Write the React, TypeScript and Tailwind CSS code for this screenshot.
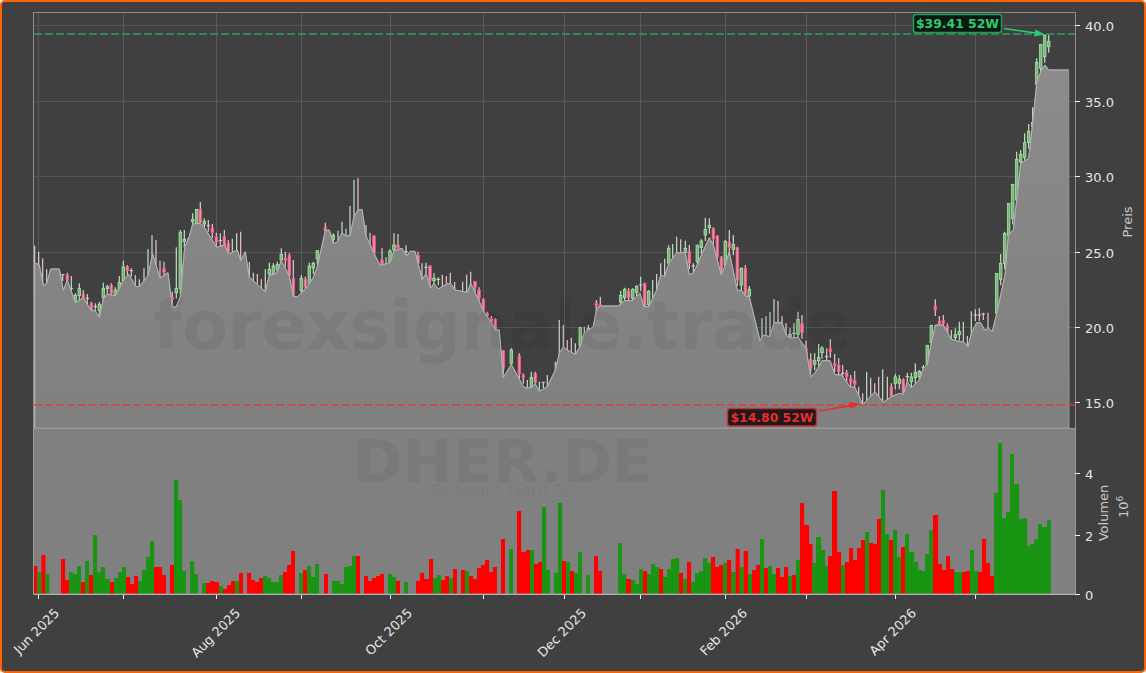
const area1 = [[104,788],[118,795],[130,856],[140,850],[152,807],[178,807],[190,871],[202,840],[226,908],[250,893],[274,932],[286,932],[298,952],[310,897],[322,882],[346,888],[370,842],[386,823],[408,860],[420,858],[444,826],[458,762],[480,834],[504,818],[517,920],[528,922],[541,890],[554,740],[566,716],[578,672],[600,670],[612,680],[650,742],[674,735],[686,762],[712,750],[722,782],[736,755],[748,832],[782,862],[796,875],[808,826],[830,820],[844,782],[868,828],[880,890],[892,890],[916,868],[940,832],[952,800],[976,692],[988,690],[1000,730],[1012,726],[1026,698],[1038,708],[1050,706],[1062,650],[1074,630],[1086,628],[1098,708],[1122,760]];
const area2 = [[0,256],[30,248],[42,212],[66,205],[80,228],[90,214],[105,214],[127,300],[138,280],[152,325],[162,310],[175,327],[200,312],[212,310],[225,330],[262,337],[272,310],[298,365],[310,392],[334,428],[346,450],[358,450],[370,593],[394,553],[418,597],[430,620],[442,625],[454,622],[466,612],[478,634],[502,620],[526,570],[538,520],[550,500],[562,510],[586,523],[600,500],[612,460],[640,440],[650,385],[662,378],[714,378],[734,362],[756,362],[780,340],[792,380],[806,380],[830,330],[842,285],[854,290],[866,250],[890,218],[916,218],[928,284],[940,278],[952,255],[964,225],[988,173],[1000,195],[1024,285],[1036,255],[1048,215],[1072,332],[1084,330],[1096,348],[1108,350]];
const area3 = [[0,1022],[10,1005],[30,1010],[42,968],[66,968],[78,1005],[90,1015],[114,1012],[138,1045],[152,1130],[164,1120],[186,1082],[210,1082],[225,1124],[245,1125],[270,1160],[284,1162],[296,1185],[308,1215],[330,1190],[345,1175],[370,1207],[394,1190],[418,1180],[430,1183],[442,1145],[454,1163],[478,1140],[490,1105],[502,1095],[514,1030],[526,975],[550,975],[574,1018],[598,1025],[610,1025],[624,1040],[634,1000],[650,968],[662,968],[674,990],[686,985],[697,995],[710,940],[735,825],[745,705],[760,690],[770,600],[782,490],[806,475],[817,380],[830,250],[842,215],[855,195],[866,210],[926,210]];

const pts: [number, number][] = [
  ...area1.map(([x, y]): [number, number] => [x / 3, y / 3]),
  ...area2.map(([x, y]): [number, number] => [380 + x / 3, 180 + y / 3]),
  ...area3.map(([x, y]): [number, number] => [760 + x / 3, y / 3]),
];
const topLine = pts.map(([x, y]) => `L${x.toFixed(1)} ${y.toFixed(1)}`).join(" ");
const areaPath = `M35 428 L35 ${pts[0][1]} ${topLine} L1069 428 Z`;
const linePath = `M35 ${pts[0][1]} ${topLine}`;

type C = [number, string, number, number?, number?];
const c1: C[] = [[104,"r",737],[116,"g",755],[128,"r",775],[140,"g",808],[188,"r",824,824,825],[202,"r",818,825,840],[214,"g",828,866,866],[226,"g",880,886,905],[238,"g",850,866,886],[250,"r",870,882,893],[262,"g",882,895,895],[274,"r",905,910,932],[286,"g",910,920,920],[298,"g",905,913,932],[310,"g",848,866,893],[322,"g",855,860,866],[334,"r",850,856,880],[346,"g",862,870,885],[358,"g",828,847,870],[370,"g",782,801,842],[382,"r",795,800,812],[394,"r",805,812,812],[406,"r",825],[418,"g",838],[432,"g",805],[444,"g",747],[456,"g",706],[468,"r",720],[480,"r",782],[492,"r",785,805,817],[517,"r",875,892,898],[529,"g",742,866,878],[541,"g",690,697,865],[553,"g",690,718,725],[566,"g",714,716,716],[578,"g",640,658,665],[590,"g",628,628,670],[601,"r",606,628,668],[613,"g",655,664,672],[625,"r",660,677,677],[637,"r",672,683,697],[649,"r",698,710,728],[661,"g",700,722,722],[673,"r",690,710,736],[685,"r",720,730,754],[697,"g",716],[710,"g",700],[722,"r",695],[748,"r",786],[760,"r",818],[772,"r",822],[784,"r",838],[796,"g",808],[808,"g",788,808,822],[820,"g",790,798,822],[832,"g",785,794,810],[844,"g",745,763,780],[856,"r",755,775,782],[868,"r",760,766,826],[880,"r",780,835,888],[904,"g",825,835,872],[916,"r",830,838,860],[928,"g",788,798,850],[940,"g",785,790,804],[952,"g",752,752,776],[976,"r",668,683,692],[1000,"g",700,706,718],[1014,"g",692],[1026,"g",665],[1038,"g",686],[1050,"g",618],[1062,"g",540],[1074,"r",535],[1098,"r",675],[1110,"r",698],[1122,"r",705,708,760]];
const c2: C[] = [[6,"r",205,240,252],[18,"g",232],[30,"g",208,213,247],[42,"g",160,195,210],[54,"r",162,195,203],[66,"g",205],[78,"g",196,215,215],[114,"r",215,226,250],[126,"r",250],[138,"g",248,262,262],[150,"r",255,258,302],[162,"g",280,295,302],[175,"g",292,298,298],[187,"r",284],[199,"r",288],[211,"r",278],[224,"r",306],[248,"r",305],[260,"g",284],[272,"r",275],[285,"r",304,304,322],[297,"r",322,330,354],[310,"r",355,358,392],[322,"r",395,400,408],[334,"r",408,416,426],[346,"r",415,418,448],[370,"r",510,512,565],[394,"g",505,510,550],[418,"r",520,528,582],[430,"r",580,586,593],[442,"r",600],[454,"g",575,592,622],[466,"r",575,580,607],[478,"g",605],[490,"g",607,607,607],[502,"g",585],[526,"g",545],[538,"g",420],[550,"r",435],[562,"r",480],[574,"r",473],[586,"g",490],[601,"g",440,443,500],[613,"r",440],[625,"g",435,445,478],[649,"r",360,370,377],[661,"r",350,374,380],[722,"g",332,346,366],[734,"g",323,328,353],[746,"r",325,333,353],[758,"g",325,328,355],[770,"g",316,319,338],[782,"g",290,315,315],[794,"r",308,310,380],[806,"g",330,334,374],[818,"g",300],[830,"g",282],[842,"g",250],[854,"g",236],[866,"g",196,205,250],[878,"g",192],[890,"g",170],[902,"r",178],[916,"g",182,205,218],[928,"r",195,214,250],[940,"g",250,258,258],[952,"g",195,195,245],[964,"g",178,183,203],[976,"g",113,148,165],[988,"g",115,136,143],[1000,"r",142,145,176],[1012,"r",165,168,230],[1024,"r",228,233,280],[1036,"g",180,184,255],[1048,"r",150,187,203],[1060,"g",165,193,208],[1072,"r",200,202,300],[1084,"g",262,265,315],[1096,"r",255,265,345],[1108,"g",318,328,348]];
const c3: C[] = [[6,"g",955],[18,"g",948],[30,"g",937],[42,"g",897],[54,"r",903],[66,"r",948],[78,"r",970],[90,"g",985,1003,1010],[102,"g",970,1000,1000],[114,"g",935,958,1003],[126,"r",945,970,998],[138,"r",1022,1045,1070],[152,"r",1060,1078,1105],[164,"g",1060,1082,1093],[176,"g",1032,1072,1082],[186,"g",1038,1044,1058],[200,"r",1045,1070,1070],[211,"r",1018,1045,1055],[224,"r",1062,1090,1097],[236,"r",1075,1095,1115],[248,"r",1095,1120,1120],[260,"r",1110,1117,1130],[272,"r",1125,1135,1148],[284,"r",1113,1141,1153],[296,"r",1160],[308,"r",1180],[320,"g",1115],[332,"r",1133],[344,"r",1150],[356,"r",1130],[368,"g",1108],[382,"g",1130],[394,"r",1150,1160,1188],[406,"g",1122,1131,1150],[418,"g",1125,1138,1150],[430,"r",1135,1138,1177],[442,"g",1118,1130,1130],[454,"g",1118,1131,1145],[466,"g",1090,1117,1133],[478,"g",1110,1114,1130],[490,"g",1095,1103,1103],[502,"g",1036,1036,1097],[514,"g",975,976,1028],[526,"r",898,918,930],[538,"r",948,964,972],[550,"r",945,961,970],[562,"r",970,978,998],[574,"g",990],[586,"g",985,1004,1013],[598,"g",965,994,1004],[610,"g",965],[622,"r",1008],[634,"g",934],[646,"g",928,945,945],[658,"r",925,945,945],[670,"r",938,942,942],[684,"r",938],[710,"g",820,820,940],[722,"g",762,790,838],[734,"g",695,700,790],[746,"g",610,610,708],[758,"g",553,553,655],[770,"g",455,478,600],[782,"g",450,463,485],[794,"g",400,428,472],[806,"g",372,394,428],[818,"g",322,367,380],[830,"g",175,187,253],[842,"g",133,133,205],[854,"g",105,105,170],[866,"g",105,124,140]];

const candles = [
  ...c1.map((c) => ({ c, ox: 0, oy: 0 })),
  ...c2.map((c) => ({ c, ox: 380, oy: 180 })),
  ...c3.map((c) => ({ c, ox: 760, oy: 0 })),
];

type V = [number, string, number];
const v1: V[] = [[102,"r",438],[112,"g",457],[124,"r",405],[136,"g",462],[183,"r",417],[195,"r",480],[207,"g",457],[219,"g",462],[231,"g",438],[243,"r",486],[255,"g",423],[267,"r",465],[279,"g",345],[291,"g",457],[303,"g",441],[315,"g",477],[330,"r",486],[342,"g",474],[354,"g",457],[366,"g",441],[378,"r",471],[390,"r",492],[402,"r",468],[414,"g",483],[426,"g",450],[438,"g",411],[450,"g",363],[462,"r",441],[474,"r",441],[486,"r",465],[510,"r",435],[522,"g",180],[534,"g",240],[546,"g",453],[570,"g",423],[582,"g",462],[606,"g",489],[618,"r",489],[630,"r",483],[642,"r",486],[657,"g",498],[669,"r",507],[681,"r",495],[693,"r",483],[705,"g",483],[717,"r",459],[741,"r",459],[753,"r",480],[765,"r",486],[777,"r",474],[789,"g",468],[801,"g",474],[813,"g",486],[825,"g",486],[837,"g",465],[849,"r",456],[861,"r",435],[873,"r",393],[897,"g",459],[909,"r",450],[921,"g",438],[933,"g",471],[945,"g",432],[972,"r",462],[996,"g",483],[1008,"g",483],[1020,"g",492],[1032,"g",441],[1044,"g",438],[1056,"g",408],[1068,"r",408],[1092,"r",468],[1104,"r",483],[1116,"r",474],[1128,"r",468]];
const v2: V[] = [[0,"r",462],[24,"g",462],[36,"g",471],[48,"r",483],[72,"g",486],[108,"r",483],[120,"r",459],[132,"r",477],[147,"r",417],[159,"g",474],[171,"g",465],[183,"r",480],[195,"r",468],[207,"g",474],[219,"r",447],[243,"r",450],[255,"g",453],[267,"r",468],[279,"r",477],[291,"r",444],[303,"r",435],[315,"r",420],[327,"r",456],[339,"r",441],[363,"r",357],[387,"g",387],[411,"r",273],[423,"r",396],[438,"r",390],[450,"g",390],[462,"r",432],[474,"r",426],[486,"g",261],[498,"g",450],[522,"g",459],[534,"g",249],[546,"r",423],[558,"g",426],[570,"r",453],[582,"g",459],[594,"g",396],[618,"g",465],[642,"r",408],[654,"r",453],[714,"g",369],[726,"g",462],[738,"r",477],[753,"g",480],[765,"g",492],[777,"g",447],[789,"r",453],[801,"g",462],[813,"g",432],[825,"g",441],[837,"r",447],[849,"g",471],[861,"g",447],[873,"g",417],[885,"g",414],[897,"r",459],[909,"g",477],[921,"r",426],[933,"g",486],[945,"g",459],[957,"g",453],[969,"g",414],[981,"g",429],[993,"r",411],[1005,"r",441],[1017,"r",435],[1029,"g",429],[1041,"r",420],[1053,"g",456],[1067,"r",387],[1079,"g",441],[1091,"r",393],[1104,"g",462],[1116,"r",450],[1128,"r",435]];
const v3: V[] = [[0,"g",357],[12,"r",444],[24,"g",438],[36,"g",462],[48,"r",444],[60,"r",471],[72,"r",441],[84,"g",468],[96,"r",465],[108,"g",420],[120,"r",249],[132,"r",315],[147,"r",372],[157,"g",429],[168,"g",351],[183,"g",390],[195,"g",438],[204,"r",408],[216,"r",213],[231,"r",396],[243,"g",435],[255,"r",426],[267,"r",384],[279,"r",420],[291,"r",384],[303,"r",360],[315,"g",336],[327,"r",369],[339,"r",372],[351,"r",297],[363,"g",210],[375,"g",342],[387,"r",360],[399,"g",330],[411,"g",411],[423,"r",381],[435,"g",342],[447,"g",396],[462,"g",426],[474,"g",450],[486,"g",453],[495,"g",402],[507,"g",330],[519,"r",285],[534,"r",432],[546,"r",450],[558,"r",408],[570,"r",447],[582,"g",456],[594,"g",456],[606,"r",456],[618,"r",453],[630,"g",390],[642,"g",453],[654,"r",456],[666,"r",357],[678,"r",429],[690,"r",468],[702,"g",219],[714,"g",69],[726,"g",294],[738,"g",276],[750,"g",102],[762,"g",192],[777,"g",297],[789,"g",294],[801,"g",378],[810,"g",372],[822,"g",357],[834,"g",312],[846,"g",321],[861,"g",300]];

const bars = [
  ...v1.map((v) => ({ x: v[0] / 3, col: v[1], y: 420 + v[2] / 3 })),
  ...v2.map((v) => ({ x: 380 + v[0] / 3, col: v[1], y: 420 + v[2] / 3 })),
  ...v3.map((v) => ({ x: 760 + v[0] / 3, col: v[1], y: 420 + v[2] / 3 })),
];

const gridX = [38.5, 123.5, 216.5, 301.5, 390.5, 483.5, 564.5, 640.5, 725.5, 806.5, 895.5, 975.5];
const priceTicks: [number, string][] = [[25.5, "40.0"], [101.5, "35.0"], [176.5, "30.0"], [252.5, "25.0"], [327.5, "20.0"], [402.5, "15.0"]];
const volumeTicks: [number, string][] = [[473.5, "4"], [535.5, "2"], [594.5, "0"]];
const dateLabels: [number, string][] = [[60, "Jun 2025"], [241, "Aug 2025"], [413, "Oct 2025"], [587, "Dec 2025"], [748, "Feb 2026"], [917, "Apr 2026"]];

export default function App() {
  return (
    <div className="w-[1146px] h-[673px] bg-white">
      <div className="w-full h-full box-border bg-[#404040] border-2 border-[#ff6200] rounded-[5px] overflow-hidden">
        <svg className="block font-['DejaVu_Sans',sans-serif]" width={1142} height={669} viewBox="2 2 1142 669">
          <defs>
            <linearGradient id="af" x1="0" y1="0" x2="0" y2="1">
              <stop offset="0" stopColor="#8b8b8b" />
              <stop offset="1" stopColor="#808080" />
            </linearGradient>
          </defs>

          {gridX.map((x) => (
            <line key={x} x1={x} x2={x} y1={13} y2={428} stroke="#5a5a5a" strokeWidth={1} />
          ))}
          {priceTicks.map(([y]) => (
            <line key={y} x1={34} x2={1075} y1={y} y2={y} stroke="#565656" strokeWidth={1} />
          ))}

          {candles.map(({ c, ox, oy }, i) => {
            const [x3, col, top, bt, bb] = c;
            const x = ox + x3 / 3;
            const y = oy + top / 3;
            const green = col === "g";
            const hasBody = bt !== undefined && bb !== undefined;
            return (
              <g key={i}>
                <line x1={x} x2={x} y1={y} y2={hasBody ? oy + (bb as number) / 3 + 6 : 428} stroke={green ? "#c2d6c2" : "#e4c0c8"} strokeWidth={1.25} />
                {hasBody &&
                  ((bb as number) - (bt as number) < 2 ? (
                    <line x1={x - 1.8} x2={x + 1.8} y1={oy + (bt as number) / 3} y2={oy + (bt as number) / 3} stroke={green ? "#c8dcc8" : "#ecc0cc"} strokeWidth={1} />
                  ) : (
                    <rect
                      x={x - 1.3}
                      width={2.6}
                      y={oy + (bt as number) / 3}
                      height={((bb as number) - (bt as number)) / 3}
                      fill={green ? "#8aa88a" : "#e090a8"}
                      stroke={green ? "#98f098" : "#ff4f80"}
                      strokeWidth={0.8}
                    />
                  ))}
              </g>
            );
          })}

          <path d={areaPath} fill="url(#af)" stroke="#989898" strokeWidth={1} />
          <path d={linePath} fill="none" stroke="#b4b4b4" strokeWidth={1} strokeLinejoin="round" />

          <text x={502} y={349} textAnchor="middle" fontWeight={700} fontSize={67} fill="#000" fillOpacity={0.055}>
            forexsignale.trade
          </text>

          <line x1={34} x2={1075} y1={34} y2={34} stroke="#2fa862" strokeOpacity={0.9} strokeWidth={1.7} strokeDasharray="8 3" />
          <line x1={34} x2={1075} y1={405} y2={405} stroke="#e03a3a" strokeOpacity={0.9} strokeWidth={1.7} strokeDasharray="8 3" />

          <rect x={34} y={429} width={1041} height={165} fill="#808080" />
          <text x={503} y={482} textAnchor="middle" fontWeight={700} fontSize={59.5} fill="#000" fillOpacity={0.055}>
            DHER.DE
          </text>
          <text x={503} y={497} textAnchor="middle" fontSize={17} fill="#000" fillOpacity={0.055}>
            Delivery Hero SE
          </text>

          {bars.map((b, i) => {
            const next = bars[i + 1];
            const gap = next ? next.x - b.x : 99;
            const w = gap < 5.5 ? gap + 0.1 : 4;
            return <rect key={i} x={b.x} y={b.y} width={w} height={594 - b.y} fill={b.col === "g" ? "#1a9413" : "#ff0000"} />;
          })}

          <rect x={33.5} y={12.5} width={1042} height={416} fill="none" stroke="#8c8c8c" strokeWidth={1} />
          <rect x={33.5} y={428.5} width={1042} height={165.5} fill="none" stroke="#999999" strokeWidth={1} />
          <line x1={33.5} x2={1075.5} y1={594.5} y2={594.5} stroke="#b0b0b0" strokeWidth={1} />

          {gridX.map((x) => (
            <line key={x} x1={x} x2={x} y1={595} y2={599} stroke="#f0f0f0" strokeWidth={1} />
          ))}
          {priceTicks.map(([y, t]) => (
            <g key={t}>
              <line x1={1075} x2={1080} y1={y} y2={y} stroke="#f0f0f0" strokeWidth={1} />
              <text x={1085} y={y + 5} fontSize={13} fill="#e6e6e6">{t}</text>
            </g>
          ))}
          {volumeTicks.map(([y, t]) => (
            <g key={t}>
              <line x1={1075} x2={1080} y1={y} y2={y} stroke="#f0f0f0" strokeWidth={1} />
              <text x={1085} y={y + 5} fontSize={13} fill="#e6e6e6">{t}</text>
            </g>
          ))}
          {dateLabels.map(([x, t]) => (
            <text key={t} x={x} y={614} textAnchor="end" fontSize={13} fill="#e6e6e6" transform={`rotate(-45 ${x} 614)`}>
              {t}
            </text>
          ))}

          <text x={1132} y={222} textAnchor="middle" fontSize={13} fill="#c8c8c8" transform="rotate(-90 1132 222)">Preis</text>
          <text x={1108} y={513} textAnchor="middle" fontSize={13} fill="#c8c8c8" transform="rotate(-90 1108 513)">Volumen</text>
          <text x={1128} y={518} fontSize={13} fill="#c8c8c8" transform="rotate(-90 1128 518)">
            10<tspan fontSize={9} dy={-5}>6</tspan>
          </text>

          <line x1={1004} y1={28.5} x2={1036} y2={33} stroke="#2ecc71" strokeWidth={1.6} />
          <polygon points="1045,34.5 1034,36.5 1035.5,29.5" fill="#2ecc71" />
          <rect x={913.5} y={14.5} width={88} height={18} rx={2.5} fill="#06140c" fillOpacity={0.92} stroke="#1f9e58" strokeWidth={1.5} />
          <text x={957.5} y={27.5} textAnchor="middle" fontWeight={700} fontSize={12.4} fill="#2ecc71">$39.41 52W</text>

          <line x1={819} y1={411} x2={851} y2={405.6} stroke="#e62e2e" strokeWidth={1.6} />
          <polygon points="860,404 850,409 849,402" fill="#e62e2e" />
          <rect x={727.5} y={408.5} width={89} height={17.5} rx={2.5} fill="#1a1214" fillOpacity={0.95} stroke="#c23434" strokeWidth={1.5} />
          <text x={772} y={421.5} textAnchor="middle" fontWeight={700} fontSize={12.4} fill="#e62e2e">$14.80 52W</text>
        </svg>
      </div>
    </div>
  );
}
